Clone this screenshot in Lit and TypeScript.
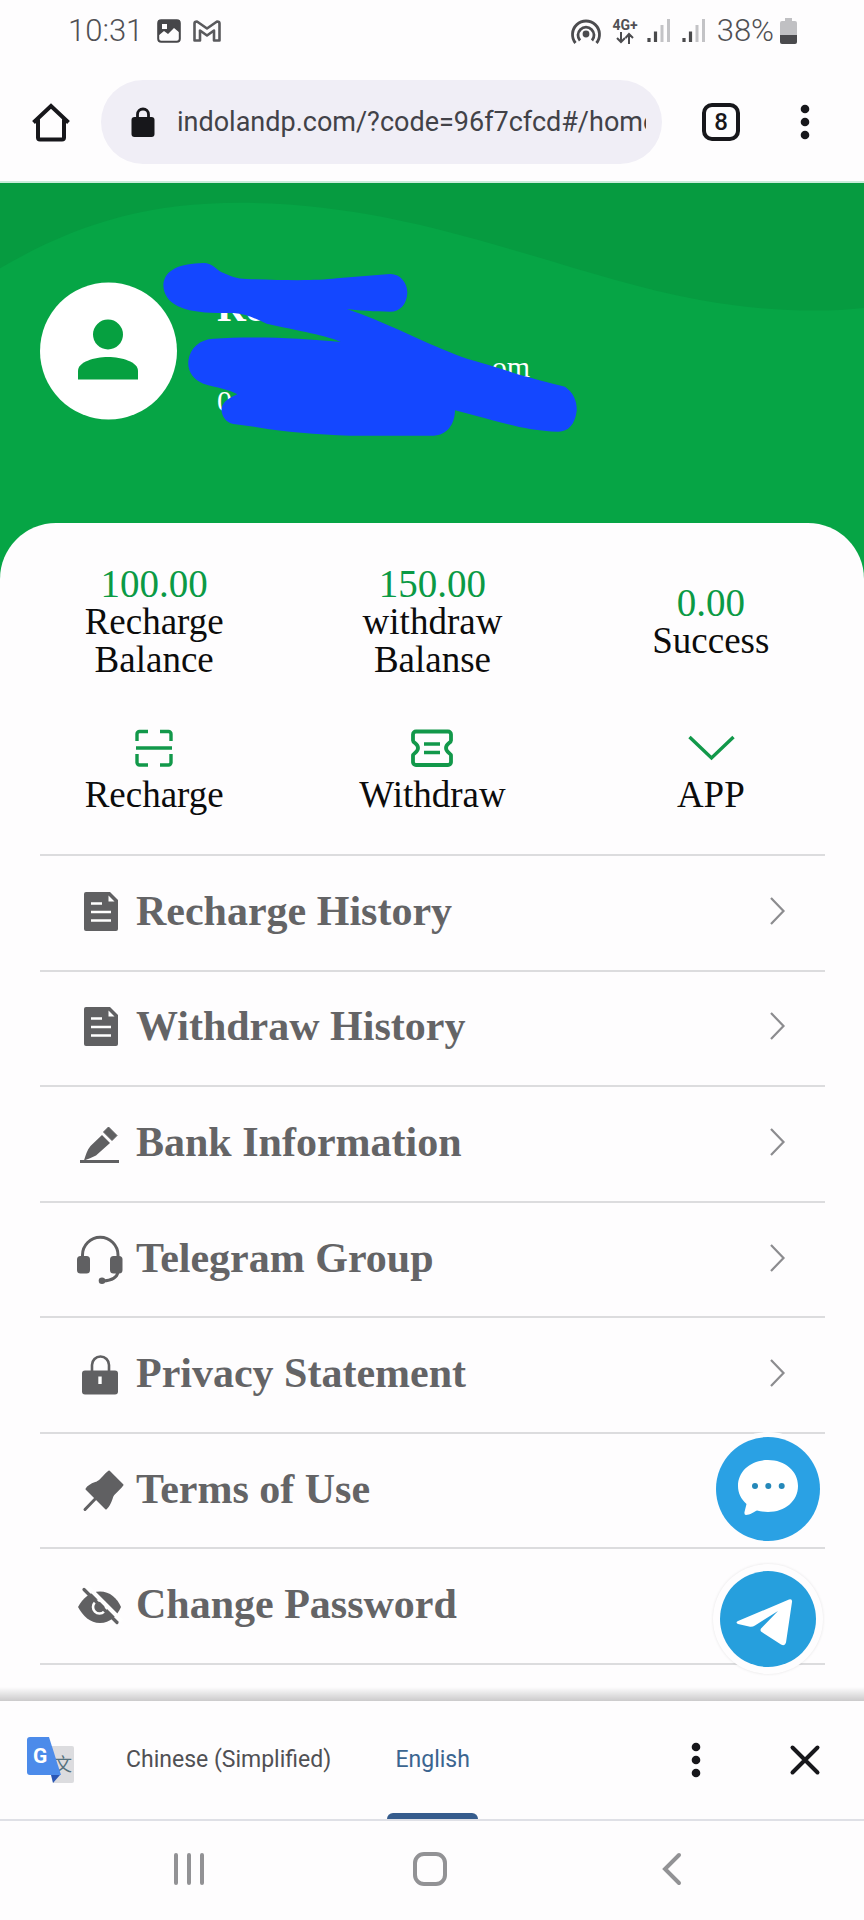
import { LitElement, html, css, svg } from "lit";
import { customElement } from "lit/decorators.js";

const menuIcons = {
  doc: svg`<path d="M10 5H34L42 13V42a2 2 0 0 1-2 2H10a2 2 0 0 1-2-2V7a2 2 0 0 1 2-2Z"/>
    <path d="M32.5 8.5V14.5H38.5Z" fill="#fff"/>
    <path d="M15 16.5H26M15 25H35M15 33.5H35" stroke="#fff" stroke-width="2.4" fill="none"/>`,
  pen: svg`<path d="M4 43.500H43" stroke="currentColor" stroke-width="3"/>
    <path d="M26 17L34 25L20 37.500C16 39.500 12 41 8 42.500C9.500 37.500 11 32 14.500 28Z"/>
    <path d="M32.500 9L41 17.500L36 22.500L27.500 14Z" stroke="currentColor" stroke-linejoin="round"/>`,
  headset: svg`<path d="M6.500 24V21a17.700 17.700 0 0 1 35.500 0V24M42 38C41 44 36 46.500 27 47" fill="none" stroke="currentColor" stroke-width="3"/>
    <rect x="1" y="22" width="13" height="17.500" rx="3.500"/><rect x="34" y="22" width="12.500" height="17.500" rx="3.500"/>
    <circle cx="26" cy="46.800" r="3.300"/>`,
  lock: svg`<path d="M16 23V16a8.500 8.500 0 0 1 17 0V23" fill="none" stroke="currentColor" stroke-width="2.600"/>
    <rect x="6" y="21.500" width="36" height="24" rx="3"/><path d="M24 27.500V35" stroke="#fff" stroke-width="3.400"/>`,
  pin: svg`<path d="M33 6.500L46.500 20C43 25 38 28 36.500 31C35 35 34 40 30 43.500L10.500 24C13 20 17 19 21 17.500C26 15 28 10 33 6.500Z" stroke="currentColor" stroke-width="2" stroke-linejoin="round"/>
    <path d="M22 31L9 44.500" stroke="currentColor" stroke-width="3" stroke-linecap="round"/>`,
  eye: svg`<path d="M2 27C7 18 14 11.500 24 11.500S41 18 45 27C41 36 34 43 24 43S7 36 2 27Z"/>
    <circle cx="23.500" cy="27" r="6.500" fill="none" stroke="#fff" stroke-width="2.600"/>
    <circle cx="23.500" cy="27" r="3"/>
    <path d="M11 6L46 41" stroke="#fff" stroke-width="4"/>
    <path d="M8 9.500L41 42.500" stroke="currentColor" stroke-width="3.200" stroke-linecap="round"/>`,
};

const entries = [
  { label: "Recharge History", icon: menuIcons.doc },
  { label: "Withdraw History", icon: menuIcons.doc },
  { label: "Bank Information", icon: menuIcons.pen },
  { label: "Telegram Group", icon: menuIcons.headset },
  { label: "Privacy Statement", icon: menuIcons.lock },
  { label: "Terms of Use", icon: menuIcons.pin },
  { label: "Change Password", icon: menuIcons.eye },
];

const balances = [
  { value: "100.00", label: "Recharge Balance" },
  { value: "150.00", label: "withdraw Balanse" },
  { value: "0.00", label: "Success" },
];

const shortcuts = [
  {
    label: "Recharge",
    icon: svg`<path d="M5 15V8a2.500 2.500 0 0 1 2.500-2.500H16M28 5.500H36.500A2.500 2.500 0 0 1 39 8V15M39 28V36.500a2.500 2.500 0 0 1-2.500 2.500H28M16 39H7.500A2.500 2.500 0 0 1 5 36.500V28M4 22H40"/>`,
  },
  {
    label: "Withdraw",
    icon: svg`<path stroke-width="3.800" d="M6 5.500H38a3 3 0 0 1 3 3V14.500C41 17 36 17.500 36 22S41 27 41 29.500V36a3 3 0 0 1-3 3H6a3 3 0 0 1-3-3V29.500C3 27 8 26.500 8 22S3 17 3 14.500V8.500a3 3 0 0 1 3-3Z"/><path d="M14 18H30M14 26.500H30"/>`,
  },
  { label: "APP", icon: svg`<path d="M0.500 11L22.500 32L44.500 11" />` },
];

const signal = html`<svg class="signal" width="24" height="24" viewBox="0 0 24 24" aria-hidden="true">
  <path d="M2 19V23M8.500 12.500V23" stroke="#4a4a4c" stroke-width="3.200"/>
  <path d="M15 6V23M21.500 0V23" stroke="#c3c3c6" stroke-width="3"/>
</svg>`;

const dots = html`<svg width="10" height="36" viewBox="0 0 10 36" aria-hidden="true">
  <g fill="#17171b"><circle cx="5" cy="5" r="4.300"/><circle cx="5" cy="18" r="4.300"/><circle cx="5" cy="31" r="4.300"/></g>
</svg>`;

@customElement("app-root")
export class AppRoot extends LitElement {
  static styles = css`
    :host {
      display: flex;
      flex-direction: column;
      min-height: 100vh;
      background: #fefdfe;
      color: #0c0c0c;
      font-family: "Liberation Serif", serif;
    }
    * { box-sizing: border-box; }
    svg { display: block; flex: none; overflow: visible; }
    button {
      display: flex;
      align-items: center;
      justify-content: center;
      border: 0;
      padding: 0;
      background: none;
      color: inherit;
      font: inherit;
      cursor: pointer;
    }
    .status {
      display: flex;
      align-items: center;
      height: 62px;
      padding: 0 67px 0 68px;
      color: #505054;
      font: 300 31px/40px Roboto, sans-serif;
    }
    .photo { margin-left: 14px; }
    .mail { margin-left: 12px; }
    .status-right { display: flex; align-items: center; margin-left: auto; }
    .network {
      display: flex;
      flex-direction: column;
      align-items: center;
      margin: 0 9px 0 10px;
      font: 700 14px/13px Roboto, sans-serif;
    }
    .signal { margin-right: 11px; }
    .battery { margin-left: 6px; }
    .toolbar {
      display: flex;
      align-items: center;
      padding: 18px 34px 17px 0;
      border-bottom: 2px solid #c8ecd9;
    }
    .home { width: 101px; height: 84px; }
    .address {
      display: flex;
      align-items: center;
      flex: 1;
      min-width: 0;
      height: 84px;
      padding: 0 16px 0 30px;
      border-radius: 42px;
      background: #f0eef6;
      gap: 22px;
    }
    .url {
      flex: 1;
      min-width: 0;
      border: 0;
      padding: 0;
      background: none;
      outline: none;
      color: #424248;
      font: 400 27px/36px Roboto, sans-serif;
    }
    .tabs { width: 118px; height: 84px; }
    .tab-count {
      width: 38px;
      height: 38px;
      border: 4px solid #17171b;
      border-radius: 10px;
      color: #17171b;
      font: 500 24px/30px Roboto, sans-serif;
    }
    .more { width: 50px; height: 84px; }
    .hero {
      position: relative;
      padding: 99px 40px 160px;
      background: #06a545;
    }
    .wave { position: absolute; top: 0; left: 0; width: 100%; height: 129px; }
    .profile { position: relative; display: flex; align-items: flex-start; gap: 40px; }
    .info { width: 313px; padding-top: 4px; color: #fff; font-size: 30px; line-height: 34px; }
    .name { margin: 0 0 20px; font-size: 40px; line-height: 44px; }
    .email { text-align: right; }
    .scribble { position: absolute; left: 110px; top: -41px; }
    .panel {
      position: relative;
      display: flex;
      flex-direction: column;
      flex: 1;
      margin-top: -56px;
      padding: 42px 0 36px;
      border-radius: 56px 56px 0 0;
      background: #fefdfe;
    }
    .grid {
      display: grid;
      grid-template-columns: repeat(3, 1fr);
      align-items: center;
      padding: 0 14px 0 15px;
      font-size: 37px;
      line-height: 38px;
      text-align: center;
    }
    .balance { padding: 0 60px; }
    .value { color: #0b9a45; font-size: 39px; }
    .shortcuts { margin: 47px 0 40px; }
    .shortcut { flex-direction: column; gap: 6px; }
    .shortcut-icon { fill: none; stroke: #12984a; stroke-width: 3.4px; }
    .shortcut-icon path[stroke-width] { stroke-width: 3.8px; }
    .menu {
      display: flex;
      flex-direction: column;
      flex: 1;
      margin: 0 39px 0 40px;
      border-top: 2px solid #dcdcde;
    }
    .entry {
      display: flex;
      align-items: center;
      flex: 1;
      padding: 0 40px 4px 36px;
      border-bottom: 2px solid #dcdcde;
      color: #646466;
      font-size: 42px;
      font-weight: 700;
      line-height: 48px;
      text-decoration: none;
      gap: 12px;
    }
    .entry-icon { fill: currentColor; color: #606062; }
    .chevron { margin-left: auto; fill: none; stroke: #8c8c8f; stroke-width: 2.2px; }
    .floats {
      position: absolute;
      right: 41px;
      bottom: 27px;
      display: flex;
      flex-direction: column;
      align-items: center;
      gap: 23px;
    }
    .chat { border-radius: 50%; box-shadow: 0 0 0 5px #fefdfe; }
    .telegram {
      width: 110px;
      height: 110px;
      border-radius: 50%;
      background: #fefdfe;
      box-shadow: 0 0 3px rgba(0, 0, 0, 0.1);
    }
    .translate {
      position: relative;
      display: flex;
      align-items: stretch;
      height: 120px;
      padding: 0 41px 0 27px;
      border-bottom: 2px solid #dfe0e6;
      background: #fefdfe;
      color: #505054;
      font: 400 23px/32px Roboto, sans-serif;
    }
    .translate::before {
      content: "";
      position: absolute;
      left: 0;
      right: 0;
      bottom: 100%;
      height: 14px;
      background: linear-gradient(to top, rgba(0, 0, 0, 0.2), rgba(0, 0, 0, 0));
    }
    .logo { align-self: center; margin-right: 21px; }
    .lang { padding: 0 31px; border-bottom: 6px solid transparent; border-top: 6px solid transparent; }
    .lang-active { position: relative; width: 91px; padding: 0; margin-left: 25px; color: #3b6590; }
    .lang-active::after {
      content: "";
      position: absolute;
      left: 0;
      right: 0;
      bottom: -6px;
      height: 6px;
      border-radius: 6px 6px 0 0;
      background: #365c8d;
    }
    .spacer { flex: 1; }
    .tools { display: flex; align-items: center; gap: 86px; }
    .nav {
      display: grid;
      grid-template-columns: repeat(3, 1fr);
      height: 99px;
      padding: 0 71px 4px 68px;
    }
    .nav-icon { fill: none; stroke: #929295; stroke-width: 4; stroke-linecap: round; }
  `;

  render() {
    return html`
      <div class="status">
        <span>10:31</span>
        <svg class="photo" width="24" height="24" viewBox="0 0 24 24" aria-hidden="true">
          <rect x="1.200" y="1.200" width="21.600" height="21.600" rx="3" fill="none" stroke="#464649" stroke-width="2"/>
          <path d="M1 3Q1 1 3 1H21Q23 1 23 3V14L17 9L11 15L7 12L1 17ZM5 5V10H10V5Z" fill="#464649" fill-rule="evenodd"/>
        </svg>
        <svg class="mail" width="28" height="22" viewBox="0 0 28 22" aria-hidden="true">
          <path d="M1.500 3.500Q1.500 1.500 4 1.500L14 8.500L24 1.500Q26.500 1.500 26.500 3.500V20.500H21V10.500L14 15.500L7 10.500V20.500H1.500Z" fill="none" stroke="#5a5a5d" stroke-width="2.600" stroke-linejoin="round"/>
        </svg>
        <div class="status-right">
          <svg width="32" height="28" viewBox="0 0 32 28" aria-hidden="true">
            <g fill="none" stroke="#4c4c4f" stroke-width="2.800">
              <path d="M5.500 26A13.500 13.500 0 1 1 26.500 26"/><path d="M10 23.500A8 8 0 1 1 22 23.500"/>
            </g>
            <circle cx="16" cy="17" r="3.400" fill="#4c4c4f"/>
          </svg>
          <span class="network">4G+
            <svg width="18" height="12" viewBox="0 0 18 12" aria-hidden="true">
              <path d="M5 0V10M1 6L5 10L9 6M13 12V2M9.500 6L13 2L17 6" fill="none" stroke="#4c4c4f" stroke-width="2"/>
            </svg>
          </span>
          ${signal}${signal}
          <span>38%</span>
          <svg class="battery" width="17" height="26" viewBox="0 0 17 26" aria-hidden="true">
            <path d="M5 0H12V3H15Q17 3 17 5V17H0V5Q0 3 2 3H5Z" fill="#c0c0c3"/>
            <path d="M0 17H17V24Q17 26 15 26H2Q0 26 0 24Z" fill="#4a4a4d"/>
          </svg>
        </div>
      </div>

      <header class="toolbar">
        <button class="home" aria-label="Home">
          <svg width="40" height="40" viewBox="0 0 40 40" aria-hidden="true">
            <path d="M2.500 20.500L20 4L37.500 20.500M7 17.500V35.500a2 2 0 0 0 2 2H31a2 2 0 0 0 2-2V17.500" fill="none" stroke="#17171b" stroke-width="4"/>
          </svg>
        </button>
        <div class="address">
          <svg width="24" height="30" viewBox="0 0 24 30" aria-hidden="true">
            <path d="M6.500 12V7.500a5.500 5.500 0 0 1 11 0V12" fill="none" stroke="#17171b" stroke-width="2.800"/>
            <rect x="0.500" y="10" width="23" height="20" rx="3" fill="#17171b"/>
          </svg>
          <input class="url" type="text" aria-label="Address" .value=${"indolandp.com/?code=96f7cfcd#/home"} />
        </div>
        <button class="tabs" aria-label="Tabs"><span class="tab-count">8</span></button>
        <button class="more" aria-label="More">${dots}</button>
      </header>

      <section class="hero">
        <svg class="wave" viewBox="0 0 864 130" preserveAspectRatio="none" aria-hidden="true">
          <path d="M0 0H864V126C820 131 760 129 700 118C560 92 420 20 240 20C140 20 70 45 0 86Z" fill="#069b40"/>
        </svg>
        <div class="profile">
          <svg width="137" height="137" viewBox="0 0 137 137" aria-hidden="true">
            <circle cx="68.500" cy="69" r="68.500" fill="#fff"/>
            <circle cx="68" cy="52.500" r="15" fill="#06a040"/>
            <path d="M38 97.500V89C38 80 54 75 68 75S98 80 98 89V97.500Z" fill="#06a040"/>
          </svg>
          <div class="info">
            <h1 class="name">Re</h1>
            <div class="email">om</div>
            <div>0</div>
          </div>
          <svg class="scribble" width="440" height="210" viewBox="0 0 1320 630" aria-hidden="true">
            <path fill="#1447ff" d="M40 130C45 85 90 68 160 66C190 66 200 88 215 94C240 105 260 114 290 114C400 118 500 120 560 112L720 99C750 98 772 125 772 155C770 190 750 212 720 212C680 212 620 208 590 204C700 240 800 295 920 342C960 358 1020 372 1080 392C1140 412 1200 425 1245 437C1270 455 1282 480 1280 510C1275 550 1255 572 1225 572C1130 570 1060 545 1000 530L915 508C915 550 890 584 850 584L600 584C500 580 400 572 330 560L250 549C225 545 212 520 215 500C220 480 240 470 262 460C240 445 200 440 160 428C130 415 112 390 115 360C120 320 150 295 190 293C300 285 450 290 572 303C540 285 440 268 350 248C320 235 290 218 250 216L200 216C100 215 40 190 40 130Z"/>
          </svg>
        </div>
      </section>

      <main class="panel">
        <div class="grid">
          ${balances.map((b) => html`<div class="balance"><div class="value">${b.value}</div><div>${b.label}</div></div>`)}
        </div>
        <div class="grid shortcuts">
          ${shortcuts.map((s) => html`<button class="shortcut">
            <svg class="shortcut-icon" width="44" height="44" viewBox="0 0 44 44" aria-hidden="true">${s.icon}</svg>
            <span>${s.label}</span>
          </button>`)}
        </div>
        <nav class="menu">
          ${entries.map((e) => html`<a class="entry" href="#">
            <svg class="entry-icon" width="48" height="48" viewBox="0 0 48 48" aria-hidden="true">${e.icon}</svg>
            <span>${e.label}</span>
            <svg class="chevron" width="16" height="28" viewBox="0 0 16 28" aria-hidden="true"><path d="M2 1L14.500 14L2 27"/></svg>
          </a>`)}
        </nav>
        <div class="floats">
          <button class="chat" aria-label="Chat">
            <svg width="104" height="104" viewBox="0 0 104 104" aria-hidden="true">
              <circle cx="52" cy="52" r="52" fill="#2aa1e4"/>
              <path d="M52 23C69 23 82 34 82 49S69 75 52 75C48 75 44 74.500 41 73.500C38 75 34 78 30 78Q28 78 28.500 75L30.500 67C25 62 22 56 22 49C22 34 35 23 52 23Z" fill="#fff"/>
              <g fill="#2588b9"><circle cx="39" cy="49" r="3"/><circle cx="52.300" cy="49" r="3"/><circle cx="65.700" cy="49" r="3"/></g>
            </svg>
          </button>
          <button class="telegram" aria-label="Telegram">
            <svg width="96" height="96" viewBox="0 0 96 96" aria-hidden="true">
              <circle cx="48" cy="48" r="48" fill="#269fdd"/>
              <path d="M18 50L69 28.500Q72.500 27.500 72 31L66 71.500Q65 75.500 61 73.500L41 60.500Q40 59 41 57.500L58 40L35 54.500Q32 56.500 29 55.500L18 53Q15 51.500 18 50Z" fill="#fff"/>
            </svg>
          </button>
        </div>
      </main>

      <section class="translate">
        <svg class="logo" width="47" height="47" viewBox="0 0 47 47" aria-hidden="true">
          <path d="M20 9H45Q47 9 47 11V44Q47 46 45 46H26Z" fill="#dcdcdf"/>
          <text x="27" y="34" font-size="18" fill="#56717d" font-family="'Noto Sans CJK SC', sans-serif">文</text>
          <path d="M24 38H33L26 46Z" fill="#2a56b5"/>
          <path d="M3 0H22L34 38H3Q0 38 0 35V3Q0 0 3 0Z" fill="#4c8bea"/>
          <text x="6" y="26" font-size="21" font-weight="700" fill="#fff" font-family="Roboto, sans-serif">G</text>
        </svg>
        <button class="lang">Chinese (Simplified)</button>
        <button class="lang lang-active">English</button>
        <span class="spacer"></span>
        <div class="tools">
          <button aria-label="Options">${dots}</button>
          <button aria-label="Close">
            <svg width="36" height="36" viewBox="0 0 36 36" aria-hidden="true">
              <path d="M5.500 5.500L30.500 30.500M30.500 5.500L5.500 30.500" stroke="#17171b" stroke-width="4" stroke-linecap="round"/>
            </svg>
          </button>
        </div>
      </section>

      <nav class="nav">
        <button aria-label="Recents">
          <svg class="nav-icon" width="30" height="32" viewBox="0 0 30 32" aria-hidden="true"><path d="M2 2V30M15 2V30M28 2V30"/></svg>
        </button>
        <button aria-label="Home screen">
          <svg class="nav-icon" width="34" height="34" viewBox="0 0 34 34" aria-hidden="true"><rect x="2" y="2" width="30" height="30" rx="9"/></svg>
        </button>
        <button aria-label="Back">
          <svg class="nav-icon" width="18" height="32" viewBox="0 0 18 32" aria-hidden="true"><path d="M16 2L2 16L16 30"/></svg>
        </button>
      </nav>
    `;
  }
}
